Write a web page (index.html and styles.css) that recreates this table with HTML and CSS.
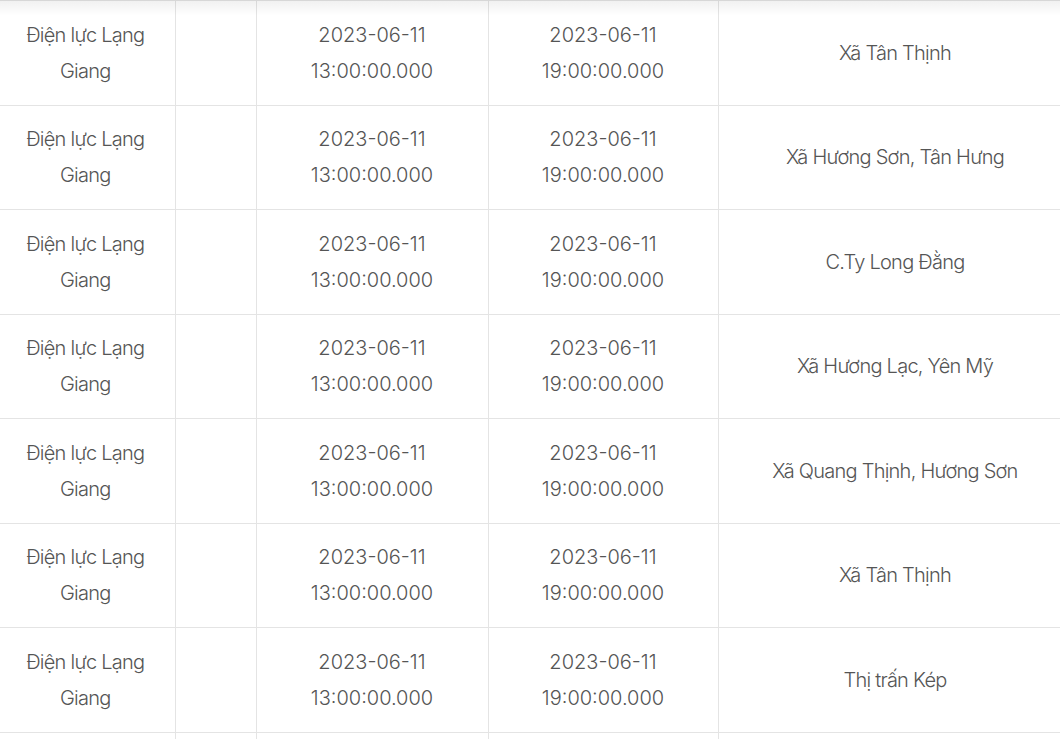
FILE: index.html
```html
<!DOCTYPE html>
<html lang="vi">
<head>
<meta charset="utf-8">
<link rel="stylesheet" href="styles.css">
</head>
<body>
<div class="wrap">
<table class="schedule">
  <colgroup>
    <col class="c-unit"><col class="c-blank"><col class="c-from"><col class="c-to"><col class="c-area">
  </colgroup>
  <tbody>
    <tr><td class="txt">Điện lực Lạng Giang</td><td></td><td>2023-06-11 13:00:00.000</td><td>2023-06-11 19:00:00.000</td><td class="txt">Xã Tân Thịnh</td></tr>
    <tr><td class="txt">Điện lực Lạng Giang</td><td></td><td>2023-06-11 13:00:00.000</td><td>2023-06-11 19:00:00.000</td><td class="txt">Xã Hương Sơn, Tân Hưng</td></tr>
    <tr><td class="txt">Điện lực Lạng Giang</td><td></td><td>2023-06-11 13:00:00.000</td><td>2023-06-11 19:00:00.000</td><td class="txt">C.Ty Long Đằng</td></tr>
    <tr><td class="txt">Điện lực Lạng Giang</td><td></td><td>2023-06-11 13:00:00.000</td><td>2023-06-11 19:00:00.000</td><td class="txt">Xã Hương Lạc, Yên Mỹ</td></tr>
    <tr><td class="txt">Điện lực Lạng Giang</td><td></td><td>2023-06-11 13:00:00.000</td><td>2023-06-11 19:00:00.000</td><td class="txt">Xã Quang Thịnh, Hương Sơn</td></tr>
    <tr><td class="txt">Điện lực Lạng Giang</td><td></td><td>2023-06-11 13:00:00.000</td><td>2023-06-11 19:00:00.000</td><td class="txt">Xã Tân Thịnh</td></tr>
    <tr><td class="txt">Điện lực Lạng Giang</td><td></td><td>2023-06-11 13:00:00.000</td><td>2023-06-11 19:00:00.000</td><td class="txt">Thị trấn Kép</td></tr>
    <tr><td class="txt">Điện lực Lạng Giang</td><td></td><td>2023-06-11 13:00:00.000</td><td>2023-06-11 19:00:00.000</td><td class="txt">Xã Tân Thịnh</td></tr>
  </tbody>
</table>
</div>
</body>
</html>
```

FILE: styles.css
```css
html, body {
  margin: 0;
  padding: 0;
  background: #fff;
  overflow: hidden;
}
.wrap {
  position: relative;
  width: 1060px;
  height: 739px;
  overflow: hidden;
}
.wrap::before {
  content: "";
  position: absolute;
  left: 0;
  top: 0;
  width: 100%;
  height: 16px;
  background: linear-gradient(to bottom, rgba(0,0,0,0.06), rgba(0,0,0,0));
  z-index: 2;
}
.schedule {
  border-collapse: collapse;
  table-layout: fixed;
  width: 1076px;
  font-family: Inter, "Noto Sans", sans-serif;
  font-size: 20px;
  font-weight: 300;
  line-height: 36px;
  color: #555;
}
.c-unit { width: 175px; }
.c-blank { width: 81px; }
.c-from { width: 232px; }
.c-to { width: 230px; }
.c-area { width: 358px; }
.schedule td {
  border: 1px solid #e4e4e4;
  padding: 15.75px 16px;
  text-align: center;
  vertical-align: middle;
}
.schedule td.txt {
  letter-spacing: -0.75px;
  padding-right: 19px;
  padding-left: 15px;
}
.schedule td:first-child {
  border-left: none;
}
```
